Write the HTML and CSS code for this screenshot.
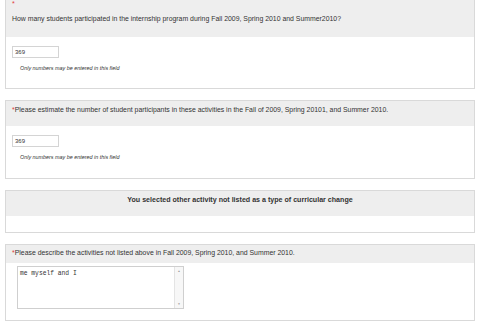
FILE: index.html
```html
<!DOCTYPE html>
<html lang="en">
<head>
  <meta charset="UTF-8" />
  <title>Survey</title>
  <link rel="stylesheet" href="styles.css">
</head>
<body>
  <div class="page">
    <div class="q q-first">
      <div class="q-head">
        <div class="req">*</div>
        <div class="q-text">How many students participated in the internship program during Fall 2009, Spring 2010 and Summer2010?</div>
      </div>
      <div class="q-body">
        <input class="num" type="text" value="369">
        <div class="hint">Only numbers may be entered in this field</div>
      </div>
    </div>

    <div class="q q-second">
      <div class="q-head">
        <div class="q-text"><span class="star">*</span>Please estimate the number of student participants in these activities in the Fall of 2009, Spring 20101, and Summer 2010.</div>
      </div>
      <div class="q-body">
        <input class="num" type="text" value="369">
        <div class="hint">Only numbers may be entered in this field</div>
      </div>
    </div>

    <div class="q q-note">
      <div class="q-head">
        <div class="q-text">You selected other activity not listed as a type of curricular change</div>
      </div>
      <div class="q-body"></div>
    </div>

    <div class="q q-last">
      <div class="q-head">
        <div class="q-text"><span class="star">*</span>Please describe the activities not listed above in Fall 2009, Spring 2010, and Summer 2010.</div>
      </div>
      <div class="q-body">
        <div class="ta">
          <textarea rows="4">me myself and I</textarea>
          <div class="sbar">
            <span>&#9650;</span>
            <span>&#9660;</span>
          </div>
        </div>
      </div>
    </div>
  </div>
</body>
</html>
```

FILE: styles.css
```css
body {
  margin: 0;
  background: #fff;
  font-family: "Liberation Sans", Arial, sans-serif;
  color: #333;
}
.page {
  padding: 0 5px;
}
.q {
  border: 1px solid #d9d9d9;
  margin-bottom: 11px;
  background: #fff;
}
.q-head {
  background: #eeeeee;
  padding: 0 6px;
}
.q-text {
  font-size: 6.9px;
  line-height: 8px;
  white-space: nowrap;
}
.req, .star {
  color: #e23b3b;
}
.req {
  font-size: 7px;
  line-height: 8px;
}
.q-body {
  padding: 0 6px;
}
.num {
  display: block;
  box-sizing: border-box;
  width: 47px;
  height: 12px;
  margin: 0;
  padding: 0 2px;
  border: 1px solid #d4d4d4;
  font-family: "Liberation Sans", Arial, sans-serif;
  font-size: 6px;
  color: #333;
}
.hint {
  font-size: 5.4px;
  font-style: italic;
  line-height: 6px;
  margin: 7px 0 0 8px;
}

/* first question: top cut off by the window */
.q-first {
  margin-top: -1px;
}
.q-first .q-head {
  height: 37px;
  box-sizing: border-box;
}
.q-first .q-text {
  margin-top: 7px;
}
.q-first .q-body {
  height: 51px;
  box-sizing: border-box;
  padding-top: 9px;
}

.q-second .q-head {
  height: 25px;
  box-sizing: border-box;
  padding-top: 5px;
}
.q-second .q-body {
  height: 52px;
  box-sizing: border-box;
  padding-top: 9px;
}

.q-note .q-head {
  height: 25px;
  box-sizing: border-box;
  padding-top: 5px;
  text-align: center;
}
.q-note .q-text {
  font-weight: bold;
  font-size: 7.1px;
}
.q-note .q-body {
  height: 16px;
}

.q-last .q-head {
  height: 18px;
  box-sizing: border-box;
  padding-top: 4px;
}
.q-last .q-body {
  height: 57px;
  box-sizing: border-box;
  padding: 3px 11px 0;
}
.ta {
  display: flex;
  width: 167px;
  height: 43px;
  border: 1px solid #cfcfcf;
  box-sizing: border-box;
}
.ta textarea {
  flex: 1;
  border: none;
  resize: none;
  outline: none;
  padding: 3px 2px;
  font-family: "Liberation Mono", "Courier New", monospace;
  font-size: 6.3px;
  color: #333;
  overflow: hidden;
}
.sbar {
  width: 8px;
  border-left: 1px solid #e4e4e4;
  background: #f7f7f7;
  display: flex;
  flex-direction: column;
  justify-content: space-between;
  align-items: center;
  padding: 2px 0;
  font-size: 3px;
  color: #999;
}
```
